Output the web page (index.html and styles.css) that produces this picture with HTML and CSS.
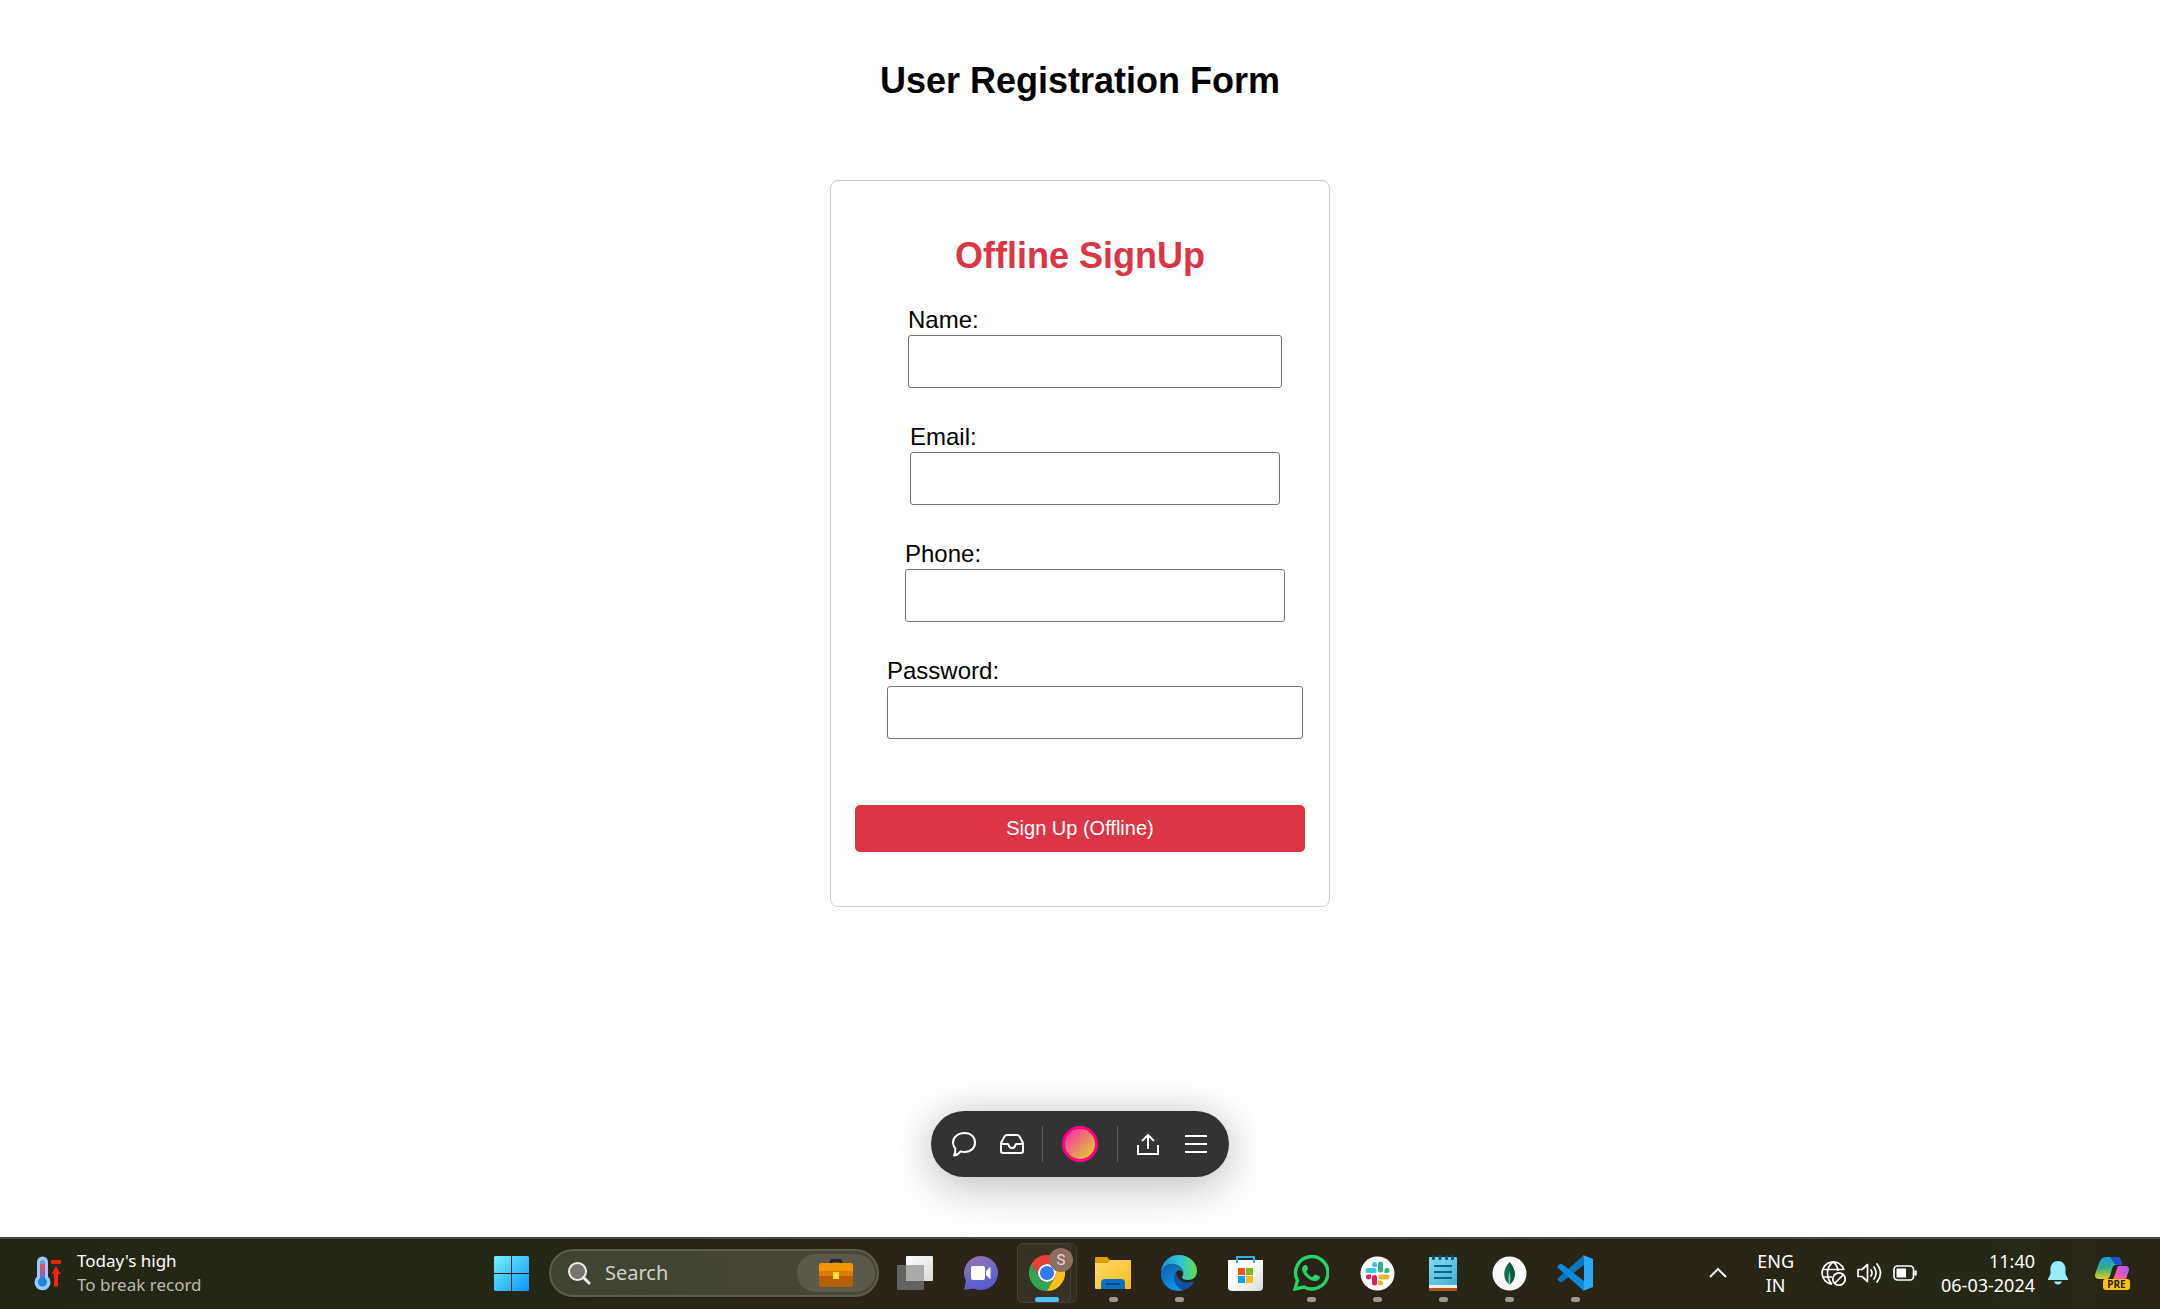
FILE: index.html
```html
<!DOCTYPE html>
<html lang="en">
<head>
<meta charset="utf-8">
<meta name="viewport" content="width=device-width, initial-scale=1">
<title>User Registration Form</title>
<link rel="stylesheet" href="styles.css">
</head>
<body>
<main class="page">
  <h1 class="heading">User Registration Form</h1>

  <form class="card">
    <h2 class="heading heading-accent">Offline SignUp</h2>
    <div class="fields">
      <div class="field field-name"><label class="field-label" for="name">Name:</label><input class="field-input" id="name" type="text"></div>
      <div class="field field-email"><label class="field-label" for="email">Email:</label><input class="field-input" id="email" type="email"></div>
      <div class="field field-phone"><label class="field-label" for="phone">Phone:</label><input class="field-input" id="phone" type="tel"></div>
      <div class="field field-password"><label class="field-label" for="password">Password:</label><input class="field-input" id="password" type="password"></div>
    </div>
    <button class="submit" type="submit">Sign Up (Offline)</button>
  </form>

  <div class="toolbar" role="toolbar" aria-label="Page tools">
    <button class="tool" type="button" aria-label="Comments">
      <svg width="26" height="26" viewBox="0 0 26 26" fill="none" stroke="#fff" stroke-width="2" stroke-linejoin="round"><path d="M13.500 2C20 2 24 6 24 11.500S20 21 13.500 21C12 21 10.800 20.800 9.600 20.300C8 22.500 6 24.200 3 24.500C4.200 22.500 4.600 20 4.300 17.500C2.800 16 2 13.800 2 11.500C2 6 7 2 13.500 2Z"/></svg>
    </button>
    <button class="tool" type="button" aria-label="Inbox">
      <svg width="26" height="22" viewBox="0 0 26 22" fill="none" stroke="#fff" stroke-width="2" stroke-linejoin="round"><path d="M2 10L5.500 3.500Q6.300 2 8 2H18Q19.700 2 20.500 3.500L24 10V18Q24 20 22 20H4Q2 20 2 18ZM2 11H8.500Q9.500 11 9.700 12.200Q10.200 15 13 15T16.300 12.200Q16.500 11 17.500 11H24"/></svg>
    </button>
    <span class="divider"></span>
    <button class="avatar" type="button" aria-label="Account"></button>
    <span class="divider"></span>
    <button class="tool" type="button" aria-label="Share">
      <svg width="22" height="22" viewBox="0 0 22 22" fill="none" stroke="#fff" stroke-width="2"><path d="M1 12V21H21V12M11 16V2M5 8L11 2L17 8"/></svg>
    </button>
    <button class="tool" type="button" aria-label="Menu">
      <svg width="22" height="20" viewBox="0 0 22 20" stroke="#fff" stroke-width="2"><path d="M0 2H22M0 10H22M0 18H22"/></svg>
    </button>
  </div>
</main>

<footer class="taskbar">
  <div class="weather">
    <svg width="27" height="35" viewBox="0 0 27 35"><path d="M3 6a5.500 5.500 0 0 1 11 0V20.500a8 8 0 1 1-11 0Z" fill="#9acbff"/><rect x="6" y="4" width="5" height="18" rx="2.500" fill="#6d9ccd"/><rect x="6" y="8" width="5" height="18" fill="url(#merc)"/><circle cx="8.500" cy="26" r="4.500" fill="#168bdc"/><rect x="17" y="4" width="10" height="4" rx="1.500" fill="#ff1f0f"/><path d="M22 10L26.500 18H24V29Q24 31 22 31T20 29V18H17.500Z" fill="#ff1f0f"/><defs><linearGradient id="merc" x2="0" y2="1"><stop stop-color="#ff4569"/><stop offset="1" stop-color="#4478cf"/></linearGradient></defs></svg>
    <div class="weather-text"><span>Today's high</span><span class="muted">To break record</span></div>
  </div>

  <button class="app" type="button" aria-label="Start">
    <svg width="35" height="35" viewBox="0 0 35 35"><defs><linearGradient id="win" gradientUnits="userSpaceOnUse" x2="35" y2="35"><stop stop-color="#77f0ff"/><stop offset="1" stop-color="#0797fb"/></linearGradient></defs><path d="M1 0H17V17H0V1ZM18 0H34L35 1V17H18ZM0 18H17V35H1L0 34ZM18 18H35V34L34 35H18Z" fill="url(#win)"/></svg>
  </button>

  <div class="search">
    <svg width="24" height="24" viewBox="0 0 24 24" fill="none" stroke="#eee"><circle cx="10.500" cy="10.500" r="8.500" stroke-width="2" fill="#77756d"/><path d="M16.500 16.500L22 22" stroke-width="3" stroke-linecap="round"/></svg>
    <input class="search-input" type="text" placeholder="Search" aria-label="Search">
    <span class="highlight">
      <svg width="34" height="28" viewBox="0 0 34 28"><path d="M12 5V3Q12 1.500 14 1.500H20Q22 1.500 22 3V5" fill="none" stroke="#222529" stroke-width="3"/><rect y="4" width="34" height="14" rx="2" fill="#f29607"/><path d="M0 12H34V17H0Z" fill="#dc7b06"/><path d="M0 17H34V26Q34 28 32 28H2Q0 28 0 26Z" fill="#b75f05"/><rect x="14" y="13" width="6" height="7" fill="#ffd51b"/><rect x="16" y="15" width="2" height="3" fill="#fff27d"/></svg>
    </span>
  </div>

  <nav class="apps" aria-label="Pinned apps">
    <button class="app" type="button" aria-label="Task view">
      <svg width="36" height="35" viewBox="0 0 36 35"><defs><linearGradient id="tv" x2="1" y2="1"><stop stop-color="#fff"/><stop offset="1" stop-color="#dadada"/></linearGradient></defs><rect y="9" width="27" height="25" rx="1" fill="#626262"/><rect x="9" width="27" height="25" rx="1" fill="url(#tv)"/><path d="M9 9H27V25H10L9 24Z" fill="#aaa"/></svg>
    </button>
    <button class="app" type="button" aria-label="Chat">
      <svg width="36" height="36" viewBox="0 0 36 36"><defs><linearGradient id="ch" x1=".3" x2=".6" y2="1"><stop stop-color="#9970b8"/><stop offset=".5" stop-color="#6c6ac7"/><stop offset="1" stop-color="#5558cc"/></linearGradient></defs><path d="M18 1A17 17 0 1 1 11 33.500L1 35L3 26A17 17 0 0 1 18 1Z" fill="url(#ch)"/><rect x="8" y="11" width="14" height="14" rx="2" fill="#fff"/><path d="M23.500 16L27 12.500V23.500L23.500 20Z" fill="#fff" stroke="#fff" stroke-linejoin="round"/></svg>
    </button>
    <button class="app app-active running" type="button" aria-label="Chrome">
      <svg width="36" height="36" viewBox="0 0 36 36"><path d="M2.410 9A18 18 0 0 1 33.590 9H18A9 9 0 0 0 10.200 13.500V22.500Z" fill="#e94235"/><path d="M2.410 9A18 18 0 0 0 18 36L25.800 22.500A9 9 0 0 1 10.200 22.500Z" fill="#32a350"/><path d="M33.590 9A18 18 0 0 1 18 36L25.800 22.500A9 9 0 0 0 18 9Z" fill="#fbc116"/><circle cx="18" cy="18" r="9" fill="#fff"/><circle cx="18" cy="18" r="7" fill="#3478ed"/></svg>
      <span class="profile">S</span>
    </button>
    <button class="app running" type="button" aria-label="File Explorer">
      <svg width="36" height="34" viewBox="0 0 36 34"><defs><linearGradient id="fo" x2="1" y2="1"><stop stop-color="#ffdc6b"/><stop offset="1" stop-color="#f8b91b"/></linearGradient></defs><path d="M0 2Q0 1 1 1H12L15 4H34V12H0Z" fill="#dc9d05"/><path d="M0 7H12L16 4H35Q36 4 36 5V32Q36 33 35 33H1Q0 33 0 32Z" fill="url(#fo)"/><path d="M6 33V27Q6 23 10 23H26Q30 23 30 27V33Z" fill="#0873c5"/><path d="M11 28H25" stroke="#07468b" stroke-width="2"/></svg>
    </button>
    <button class="app running" type="button" aria-label="Edge">
      <svg width="36" height="36" viewBox="0 0 36 36"><defs><linearGradient id="ed1" x1="0" x2="1"><stop stop-color="#1593df"/><stop offset=".55" stop-color="#32c4d6"/><stop offset="1" stop-color="#65de48"/></linearGradient><linearGradient id="ed2" x2=".5" y2="1"><stop stop-color="#0a5fab"/><stop offset="1" stop-color="#1193e8"/></linearGradient></defs><path d="M0 17C1 6 9 0 18 0C29 0 36 8 36 16C36 22 32 25 27 25C23 25 20 23.500 21.500 21C24 17 21 10 12 9C6 9 2 12 0 17Z" fill="url(#ed1)"/><path d="M0 17C2 11 7 8.500 12 9C18 10 22 14 22 18C21 15 17 14 15 17C11 24 15 34 23 35C10 39-1 29 0 17Z" fill="url(#ed2)"/><path d="M15 17C11 22 13 31 22 35C27 34 31 31 33 27C33 26 32 26 31 26.500C24 29.500 15 25 15 17Z" fill="#10529f"/></svg>
    </button>
    <button class="app" type="button" aria-label="Microsoft Store">
      <svg width="35" height="35" viewBox="0 0 35 35"><defs><linearGradient id="st" x2="1" y2="1"><stop offset=".4" stop-color="#fff"/><stop offset="1" stop-color="#d9d9d9"/></linearGradient></defs><path d="M0 4H35V31Q35 35 31 35H4Q0 35 0 31Z" fill="url(#st)"/><path d="M9 7V1H26V7" fill="none" stroke="#29b2ec" stroke-width="2"/><path d="M10 12H17V19H10Z" fill="#f25022"/><path d="M18 12H25V19H18Z" fill="#7fba00"/><path d="M10 20H17V27H10Z" fill="#00a4ef"/><path d="M18 20H25V27H18Z" fill="#ffb900"/></svg>
    </button>
    <button class="app running" type="button" aria-label="WhatsApp">
      <svg width="36" height="36" viewBox="0 0 36 36"><path d="M2 34L4.500 25.500A16.200 16.200 0 1 1 11 32Z" fill="none" stroke="#25d366" stroke-width="3.400"/><path d="M12 10C10 10.500 8.500 13 9.200 15.500C11 21 17 26 22 26C25 26 27 24 27 22L26.500 21.200L22.500 19.500Q21.800 19.300 21.300 20L19.800 21.800Q19.300 22.200 18.500 21.900C16.500 21 14.500 19 13.500 17Q13.200 16.300 13.700 15.800L15 14.200Q15.300 13.800 15 13.100L13.800 10.500Q13.500 9.900 12 10Z" fill="#25d366"/></svg>
    </button>
    <button class="app running" type="button" aria-label="Slack">
      <svg width="35" height="35" viewBox="0 0 35 35"><circle cx="17.500" cy="17.500" r="17" fill="#fff"/><g stroke-width="5" stroke-linecap="round"><path d="M8 14.500H14" stroke="#36c5f0"/><path d="M20.500 8V14" stroke="#2eb67d"/><path d="M21 21H27" stroke="#ecb22e"/><path d="M14.500 21.500V27" stroke="#e01e5a"/></g><path d="M17 11H14.500A2.500 2.500 0 1 1 17 8.500Z" fill="#36c5f0"/><path d="M24.500 17V14.500A2.500 2.500 0 1 1 27 17Z" fill="#2eb67d"/><path d="M18 24.500H20.500A2.500 2.500 0 1 1 18 27Z" fill="#ecb22e"/><path d="M11 18.500V21A2.500 2.500 0 1 1 8.500 18.500Z" fill="#e01e5a"/></svg>
    </button>
    <button class="app running" type="button" aria-label="Notepad">
      <svg width="28" height="36" viewBox="0 0 28 36"><defs><linearGradient id="no" x2="1" y2="1"><stop stop-color="#83def3"/><stop offset="1" stop-color="#42aed2"/></linearGradient></defs><path d="M0 30H28V35Q28 36 27 36H1Q0 36 0 35Z" fill="#b45213"/><path d="M0 28H28V33H0Z" fill="#eee"/><path d="M1 2H27Q28 2 28 3V30H0V3Q0 2 1 2Z" fill="url(#no)"/><path d="M5 11H23M5 17H23M5 23H23" stroke="#0b668c" stroke-width="2"/><path d="M4.500 1.500V3.500M11 1.500V3.500M17.500 1.500V3.500M23.500 1.500V3.500" stroke="#075477" stroke-width="3" stroke-linecap="round"/></svg>
    </button>
    <button class="app running" type="button" aria-label="MongoDB Compass">
      <svg width="35" height="35" viewBox="0 0 35 35"><circle cx="17.500" cy="17.500" r="17" fill="#fafafa"/><path d="M17.500 6C10 14 11 24 17.500 28.500C24 24 25 14 17.500 6Z" fill="#0b7350"/><path d="M17.500 6C25 14 24 24 17.500 28.500Z" fill="#055c42"/><path d="M17.500 15Q15.500 23 17.500 29Q19.500 23 17.500 15Z" fill="#8ac0a3"/></svg>
    </button>
    <button class="app running" type="button" aria-label="Visual Studio Code">
      <svg width="36" height="36" viewBox="0 0 36 36"><path d="M27 0L1 23Q0 24 1 25.200L3 27Q4 27.500 5 27L27 10Z" fill="#0876bd"/><path d="M27 36L1 13Q0 12 1 10.800L3 9Q4 8.500 5 9L27 26Z" fill="#0c8ade"/><path d="M26 0L36 4V32L26 36Q27 35 27 33V3Q27 1 26 0Z" fill="#2aa9f5"/></svg>
    </button>
  </nav>

  <div class="tray">
    <button class="tray-item chevron" type="button" aria-label="Show hidden icons">
      <svg width="18" height="12" viewBox="0 0 18 12" fill="none" stroke="#fff" stroke-width="2"><path d="M1 10L9 2L17 10"/></svg>
    </button>
    <button class="tray-item language" type="button"><span>ENG</span><span>IN</span></button>
    <button class="tray-item status" type="button" aria-label="Network, volume and battery">
      <svg width="25" height="25" viewBox="0 0 25 25" fill="none" stroke="#fff" stroke-width="1.700"><path d="M23 9A11.200 11.200 0 1 0 11 23.200M2 8.500H22.500M1.500 16H11M12 1Q6.500 5 6.500 12T11 23.200M12 1Q16.500 4 17 10"/><circle cx="18" cy="18" r="6.200"/><path d="M14 22L22 14"/></svg>
      <svg width="25" height="22" viewBox="0 0 25 22" fill="none" stroke="#fff" stroke-width="1.700" stroke-linejoin="round" stroke-linecap="round"><path d="M1 7.500V14.500H5L10.500 19.500V2.500L5 7.500ZM14 8Q16 11 14 14M17 5Q21 11 17 17M20 2Q27 11 20 20"/></svg>
      <svg width="24" height="16" viewBox="0 0 24 16" fill="none" stroke="#fff" stroke-width="1.700"><rect x="1" y="1" width="19.500" height="14" rx="3.500"/><path d="M3.500 4Q3.500 3.500 4 3.500H13V12.500H4Q3.500 12.500 3.500 12Z" fill="#fff" stroke="none"/><path d="M22.500 5.500V10.500" stroke-width="2.500"/></svg>
    </button>
    <button class="tray-item clock" type="button"><span>11:40</span><span>06-03-2024</span></button>
    <button class="tray-item bell" type="button" aria-label="Notifications">
      <svg width="20" height="24" viewBox="0 0 20 24" fill="#99ebff"><path d="M10 0C14.500 0 17.500 3.500 17.500 8V13L20 18V19H0V18L2.500 13V8C2.500 3.500 5.500 0 10 0ZM6 20.500H14Q13 23.500 10 23.500T6 20.500Z"/></svg>
    </button>
    <button class="tray-item copilot" type="button" aria-label="Copilot">
      <svg width="35" height="34" viewBox="0 0 35 34"><defs><linearGradient id="co1" x2="0" y2="1"><stop stop-color="#159de8"/><stop offset=".5" stop-color="#36ad86"/><stop offset="1" stop-color="#e3cf1f"/></linearGradient><linearGradient id="co2" x1="1" x2="0" y2="1"><stop stop-color="#a85bef"/><stop offset=".5" stop-color="#e453c4"/><stop offset="1" stop-color="#ff8a5b"/></linearGradient></defs><path d="M11 1H22Q25 1 26 5L27 9H21Q18 9 17 13L15 20Q14 23 12 23H4Q0 23 0 19Q2 12 5 5Q7 1 11 1Z" fill="url(#co1)"/><path d="M15 1H22Q25 1 26 5L27 9H22Q20 9 19 7Z" fill="#1c50c9"/><path d="M23 10H31Q34 10 34 14L31 23Q30 26 27 26H16Q18 25 19 21Z" fill="url(#co2)"/></svg>
      <span class="pre">PRE</span>
    </button>
  </div>
</footer>
</body>
</html>
```
FILE: styles.css
```css
*, *::before, *::after { box-sizing: border-box; }

body {
  margin: 0;
  min-height: 100vh;
  display: flex;
  flex-direction: column;
  background: #fff;
  color: #000;
  font-family: "Liberation Sans", Arial, sans-serif;
}

button, input { font: inherit; color: inherit; }
button { padding: 0; border: 0; background: none; cursor: pointer; }
svg { display: block; flex: none; }

.page {
  flex: 1;
  display: flex;
  flex-direction: column;
  align-items: center;
  padding: 60px 16px;
}

.heading {
  margin: 0;
  font-size: 36px;
  line-height: 42px;
  font-weight: 700;
  text-align: center;
}

.heading-accent { color: #dc3545; }

.card {
  width: 100%;
  max-width: 500px;
  margin: 78px 0 48px;
  padding: 54px 24px;
  border: 1px solid #ccc;
  border-radius: 8px;
}

.fields {
  display: flex;
  flex-direction: column;
  align-items: center;
  gap: 37px;
  margin: 31px 0 66px;
  padding-left: 30px;
}

.field {
  display: flex;
  flex-direction: column;
  max-width: 100%;
}

.field-name { width: 374px; }
.field-email { width: 370px; }
.field-phone { width: 380px; }
.field-password { width: 416px; }

.field-label {
  padding-bottom: 3px;
  font-size: 24px;
  line-height: 24px;
}

.field-input {
  width: 100%;
  height: 53px;
  padding: 12px;
  border: 1px solid #767676;
  border-radius: 3px;
  background: #fff;
  font-size: 20px;
}

.submit {
  width: 100%;
  padding: 12px;
  border-radius: 5px;
  background: #dc3545;
  color: #fff;
  font-size: 20px;
  line-height: 23px;
}

.toolbar {
  display: flex;
  align-items: center;
  margin-top: auto;
  padding: 9px;
  border-radius: 33px;
  background: #333;
  box-shadow: 0 12px 48px rgba(0, 0, 0, .2), 0 0 36px rgba(0, 0, 0, .1);
}

.tool {
  display: grid;
  place-items: center;
  width: 48px;
  height: 48px;
}

.divider {
  width: 1px;
  height: 36px;
  margin: 0 6px;
  background: #5b5b5b;
}

.avatar {
  width: 36px;
  height: 36px;
  margin: 0 13px;
  border: 3px solid #ff0080;
  border-radius: 50%;
  background: linear-gradient(135deg, #fb0fca, #d9f30c);
  background-origin: border-box;
}

.taskbar {
  display: flex;
  align-items: center;
  height: 72px;
  padding-bottom: 2px;
  border-top: 2px solid #464643;
  background: linear-gradient(90deg, #242615, #242616 24%, #2b2417 38%, #2a2317 62%, #272617 68%, #2a2416 74%, #282516 82%, #252817 92%, #292518);
  color: #fff;
  font-family: "Noto Sans", "Open Sans", sans-serif;
  font-size: 18px;
  line-height: 24px;
}

.weather {
  display: flex;
  align-items: center;
  gap: 16px;
  width: 478px;
  padding-left: 34px;
  font-size: 17px;
}

.weather-text { display: flex; flex-direction: column; }
.muted { color: #bbb9b2; }

.search {
  display: flex;
  align-items: center;
  width: 330px;
  height: 48px;
  margin: 0 3px 0 5px;
  padding: 0 2px 0 16px;
  border: 2px solid #5d5c50;
  border-radius: 24px;
  background: linear-gradient(90deg, #3f4432, #494637);
}

.search-input {
  flex: 1;
  min-width: 0;
  padding: 0 14px;
  border: 0;
  background: none;
  font-size: 20px;
}

.search-input::placeholder { color: #d4d2cc; opacity: 1; }

.highlight {
  display: grid;
  place-items: center;
  width: 78px;
  height: 38px;
  border-radius: 19px;
  background: #5b584c;
}

.apps { display: flex; }

.app {
  position: relative;
  display: grid;
  place-items: center;
  width: 66px;
  height: 60px;
}

.app svg { position: relative; }

.running::after {
  content: "";
  position: absolute;
  bottom: 1px;
  left: 50%;
  width: 9px;
  height: 5px;
  margin-left: -4px;
  border-radius: 3px;
  background: #9c9993;
}

.app-active::before {
  content: "";
  position: absolute;
  top: 0;
  left: 3px;
  width: 54px;
  height: 60px;
  border: 1px solid #464137;
  border-radius: 6px;
  background: #373126;
  box-shadow: 6px 0 0 -1px #322d23, 6px 0 0 0 #403b31;
}

.app-active::after {
  width: 24px;
  margin-left: -12px;
  background: #4cc2ff;
}

.profile {
  position: absolute;
  top: 5px;
  left: 35px;
  width: 24px;
  height: 24px;
  border-radius: 50%;
  background: #8d6e63;
  color: #e6dad5;
  font-family: Roboto, sans-serif;
  font-size: 15px;
  line-height: 24px;
}

.tray {
  display: flex;
  align-items: center;
  margin-left: auto;
  padding-right: 30px;
}

.tray-item { display: flex; }
.chevron { margin-right: 30px; }

.language {
  flex-direction: column;
  align-items: center;
  margin-right: 27px;
}

.status {
  align-items: center;
  gap: 11px;
  margin-right: 24px;
}

.clock {
  flex-direction: column;
  align-items: flex-end;
  margin-right: 13px;
}

.bell { margin-right: 27px; }
.copilot { position: relative; }

.pre {
  position: absolute;
  top: 23px;
  left: 8px;
  width: 27px;
  border-radius: 3px;
  background: #ffc20a;
  color: #221d08;
  font-size: 10px;
  font-weight: 700;
  line-height: 11px;
}
```
